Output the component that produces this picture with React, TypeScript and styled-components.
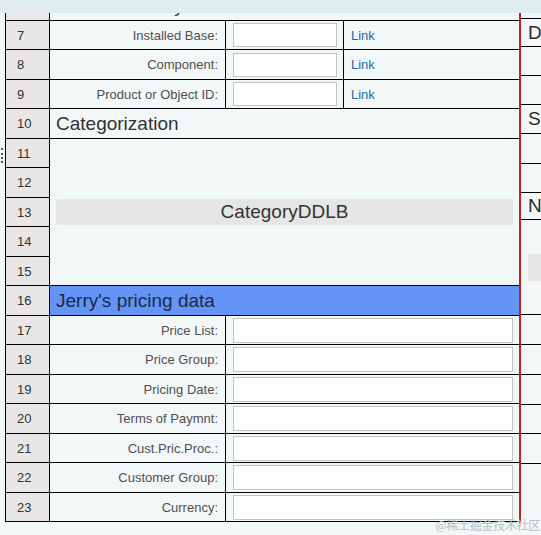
import React from "react";
import styled, { createGlobalStyle } from "styled-components";

const GlobalStyle = createGlobalStyle`
  html, body {
    margin: 0;
    padding: 0;
    background: #f2f7f8;
  }
  body {
    font-family: "Liberation Sans", Arial, sans-serif;
  }
`;

// row heights incl. the 1px bottom line; first row is mostly scrolled away
const ROW_HEIGHTS = [30, 29, 30, 29, 30, 29, 30, 29, 30, 29, 30, 29, 30, 29, 30, 29, 30, 29];

const Page = styled.div`
  position: relative;
  width: 541px;
  height: 535px;
  overflow: hidden;
  background: #f2f7f8;
`;

const TopStrip = styled.div`
  height: 13px;
  background: #dfecee;
`;

const Body = styled.div`
  display: flex;
  height: 522px;
`;

const Gutter = styled.div`
  position: relative;
  width: 5px;
  flex: none;
`;

const Handle = styled.div`
  position: absolute;
  left: 1px;
  top: 135px;
  width: 0;
  height: 15px;
  border-left: 2px dotted #555;
`;

const Form = styled.div`
  width: 514px;
  height: 510px;
  flex: none;
  overflow: hidden;
  border-right: 2px solid #c8201e;
`;

const Grid = styled.div`
  display: grid;
  margin-top: -22px;
  grid-template-columns: 44px 176px 118px 175px;
  grid-template-rows: ${ROW_HEIGHTS.map((h) => `${h}px`).join(" ")};
  border-left: 1px solid #000;
`;

const Cell = styled.div`
  display: flex;
  align-items: center;
  box-sizing: border-box;
  border-bottom: 1px solid #000;
  border-right: 1px solid #000;
  min-width: 0;
  overflow: hidden;
`;

const RowNum = styled(Cell)`
  grid-column: 1;
  background: #e8e7e5;
  padding-left: 11px;
  font-size: 13px;
  color: #333;
`;

const Label = styled(Cell)`
  justify-content: flex-end;
  padding-right: 7px;
  font-size: 13px;
  color: #505050;
  white-space: nowrap;
`;

const InputCell = styled(Cell)<{ $wide?: boolean }>`
  padding-left: 7px;
  grid-column: ${(p) => (p.$wide ? "3 / 5" : "auto")};
  border-right: ${(p) => (p.$wide ? "none" : "1px solid #000")};
`;

const TextBox = styled.input<{ $wide?: boolean }>`
  box-sizing: border-box;
  width: ${(p) => (p.$wide ? "280px" : "104px")};
  height: ${(p) => (p.$wide ? "25px" : "24px")};
  border: 1px solid #c3c3c3;
  background: #fff;
  margin: 0;
  padding: 0 3px;
  outline: none;
`;

const LinkCell = styled(Cell)`
  padding-left: 7px;
  border-right: none;
`;

const Link = styled.a`
  font-size: 13px;
  color: #1d67a8;
  text-decoration: none;
`;

const Heading = styled(Cell)<{ $blue?: boolean }>`
  grid-column: 2 / 5;
  border-right: none;
  padding-left: 6px;
  font-size: 19px;
  white-space: nowrap;
  background: ${(p) => (p.$blue ? "#6494f6" : "transparent")};
  color: ${(p) => (p.$blue ? "#1b2a46" : "#333")};
`;

const CategoryCell = styled(Cell)`
  grid-column: 2 / 5;
  grid-row: span 5;
  border-right: none;
  padding: 0 6px;
`;

const Dropdown = styled.div`
  flex: 1;
  height: 26px;
  line-height: 26px;
  border-radius: 2px;
  background: #e6e6e6;
  text-align: center;
  font-size: 19px;
  color: #333;
`;

const Side = styled.div`
  flex: 1;
  display: flex;
  flex-direction: column;
  overflow: hidden;
`;

const SideRow = styled.div<{ $h: number }>`
  position: relative;
  height: ${(p) => p.$h}px;
  flex: none;
  box-sizing: border-box;
  border-bottom: 1px solid #000;
  display: flex;
  align-items: center;
  padding-left: 7px;
  font-size: 19px;
  color: #2a2a2a;
  white-space: nowrap;
`;

const SideBlock = styled(SideRow)`
  align-items: flex-start;
  padding-top: 34px;
`;

const SideButton = styled.div`
  width: 20px;
  height: 27px;
  background: #e6e6e6;
`;

const Watermark = styled.div`
  position: absolute;
  right: 1px;
  bottom: 2px;
  font-family: "Noto Sans CJK SC", sans-serif;
  font-size: 12px;
  color: #b9c0c3;
  letter-spacing: -0.3px;
`;

const topFields = ["Installed Base:", "Component:", "Product or Object ID:"];
const pricingFields = [
  "Price List:",
  "Price Group:",
  "Pricing Date:",
  "Terms of Paymnt:",
  "Cust.Pric.Proc.:",
  "Customer Group:",
  "Currency:",
];

const sideRows: { h: number; text?: string }[] = [
  { h: 6 },
  { h: 28, text: "D" },
  { h: 29 },
  { h: 29 },
  { h: 29, text: "S" },
  { h: 30 },
  { h: 29 },
  { h: 27, text: "N" },
];
const sideTail = [30, 30, 30, 29, 30];

export default function App() {
  return (
    <Page>
      <GlobalStyle />
      <TopStrip />
      <Body>
        <Gutter>
          <Handle />
        </Gutter>
        <Form>
          <Grid>
            <RowNum>6</RowNum>
            <Heading>Service Activity</Heading>

            {topFields.map((f, i) => (
              <React.Fragment key={f}>
                <RowNum>{7 + i}</RowNum>
                <Label>{f}</Label>
                <InputCell>
                  <TextBox />
                </InputCell>
                <LinkCell>
                  <Link href="#">Link</Link>
                </LinkCell>
              </React.Fragment>
            ))}

            <RowNum>10</RowNum>
            <Heading>Categorization</Heading>

            <RowNum>11</RowNum>
            <CategoryCell>
              <Dropdown>CategoryDDLB</Dropdown>
            </CategoryCell>
            <RowNum>12</RowNum>
            <RowNum>13</RowNum>
            <RowNum>14</RowNum>
            <RowNum>15</RowNum>

            <RowNum>16</RowNum>
            <Heading $blue>Jerry's pricing data</Heading>

            {pricingFields.map((f, i) => (
              <React.Fragment key={f}>
                <RowNum>{17 + i}</RowNum>
                <Label>{f}</Label>
                <InputCell $wide>
                  <TextBox $wide />
                </InputCell>
              </React.Fragment>
            ))}
          </Grid>
        </Form>
        <Side>
          {sideRows.map((r, i) => (
            <SideRow key={i} $h={r.h}>
              {r.text}
            </SideRow>
          ))}
          <SideBlock $h={95}>
            <SideButton />
          </SideBlock>
          {sideTail.map((h, i) => (
            <SideRow key={`t${i}`} $h={h} />
          ))}
        </Side>
      </Body>
      <Watermark>@稀土掘金技术社区</Watermark>
    </Page>
  );
}
